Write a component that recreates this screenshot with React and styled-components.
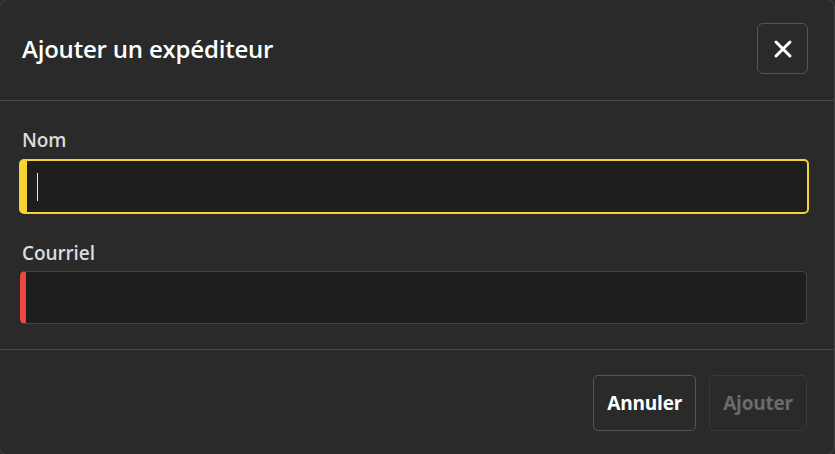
import React from "react";
import styled, { createGlobalStyle } from "styled-components";

const Global = createGlobalStyle`
  html, body { margin: 0; padding: 0; background: #2a2a2a; overflow: hidden; }
  body { font-family: "Open Sans", "Noto Sans", "Liberation Sans", sans-serif; }
  * { box-sizing: border-box; }
`;

const Dialog = styled.div`
  width: 836px;
  height: 456px;
  margin: -1px 0 0 -1px;
  border: 1px solid #444444;
  border-radius: 8px;
  background: #2a2a2a;
  display: flex;
  flex-direction: column;
  overflow: hidden;
`;

const Header = styled.div`
  height: 101px;
  border-bottom: 1px solid #474747;
  display: flex;
  align-items: center;
  justify-content: space-between;
  padding: 0 26px 0 22px;
  flex: none;
`;

const Title = styled.h2`
  margin: 0;
  margin-top: -4px;
  font-size: 24px;
  font-weight: 600;
  color: #ffffff;
  letter-spacing: -0.2px;
`;

const CloseButton = styled.button`
  width: 51px;
  height: 51px;
  margin-top: -3px;
  border: 1px solid #555555;
  border-radius: 6px;
  background: transparent;
  display: flex;
  align-items: center;
  justify-content: center;
  padding: 0;
`;

const Body = styled.div`
  display: flex;
  flex-direction: column;
  padding: 26px 27px 0 20px;
  height: 249px;
  border-bottom: 1px solid #474747;
  flex: none;
`;

const Label = styled.label`
  font-size: 19px;
  font-weight: 600;
  color: #dcdcdc;
  line-height: 26px;
  padding-left: 2px;
  margin-top: ${(p) => p.$top || 0}px;
  margin-bottom: ${(p) => p.$gap || 6}px;
  letter-spacing: -0.1px;
`;

const Field = styled.div`
  height: ${(p) => (p.$focused ? 55 : 53)}px;
  margin: ${(p) => (p.$focused ? "0 -2px 0 -1px" : "0")};
  background: #1e1e1e;
  border-radius: 5px;
  border: ${(p) => (p.$focused ? "2px solid #f7d232" : "1px solid #464646")};
  border-left: ${(p) => (p.$focused ? "8px solid #f7d232" : "6px solid #f04545")};
  display: flex;
  align-items: center;
  padding-left: 10px;
`;

const Caret = styled.div`
  width: 1px;
  height: 28px;
  background: #e8e8e8;
`;

const Footer = styled.div`
  flex: 1;
  display: flex;
  justify-content: flex-end;
  align-items: flex-start;
  gap: 13px;
  padding: 25px 27px 0 0;
`;

const Button = styled.button`
  height: 56px;
  padding: 0 13px;
  border-radius: 5px;
  border: 1px solid ${(p) => (p.$disabled ? "#3a3a3a" : "#565656")};
  background: transparent;
  color: ${(p) => (p.$disabled ? "#6b6b6b" : "#ffffff")};
  font-family: inherit;
  font-size: 19px;
  font-weight: 700;
  letter-spacing: -0.2px;
`;

export default function App() {
  return (
    <>
      <Global />
      <Dialog>
        <Header>
          <Title>Ajouter un expéditeur</Title>
          <CloseButton aria-label="Fermer">
            <svg width="20" height="20" viewBox="0 0 20 20">
              <path d="M3 3 L17 17 M17 3 L3 17" stroke="#ffffff" strokeWidth="3" strokeLinecap="round" />
            </svg>
          </CloseButton>
        </Header>
        <Body>
          <Label>Nom</Label>
          <Field $focused>
            <Caret />
          </Field>
          <Label $top={26} $gap={5}>Courriel</Label>
          <Field />
        </Body>
        <Footer>
          <Button>Annuler</Button>
          <Button $disabled>Ajouter</Button>
        </Footer>
      </Dialog>
    </>
  );
}
